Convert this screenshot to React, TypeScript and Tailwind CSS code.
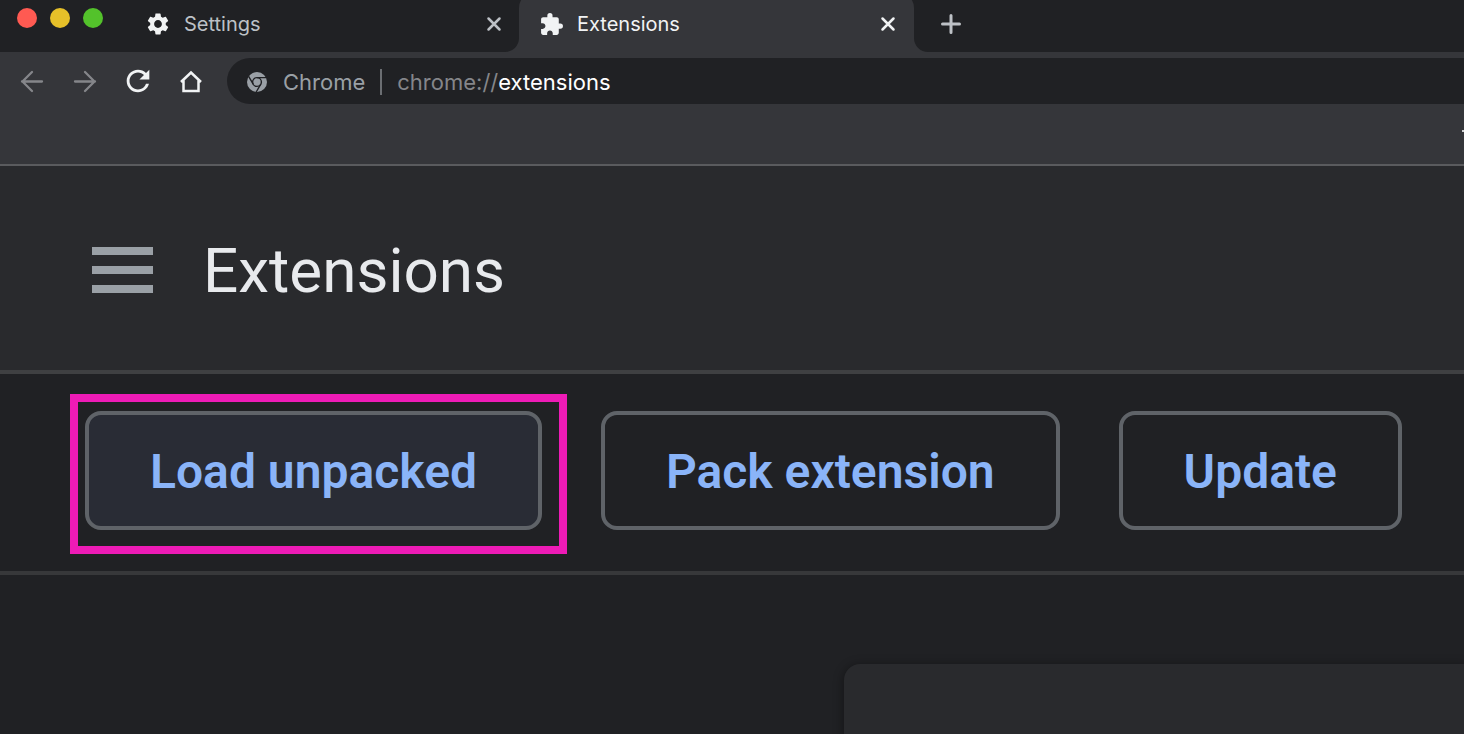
import type { ReactNode } from "react";
import { MdExtension, MdRefresh, MdSettings } from "react-icons/md";

function Cross() {
  return (
    <svg viewBox="0 0 16 16" className="size-4" fill="none" stroke="currentColor" strokeWidth="2.5" strokeLinecap="round">
      <path d="M2.500 2.500l11 11M13.500 2.500l-11 11" />
    </svg>
  );
}

function Arrow({ forward = false }: { forward?: boolean }) {
  return (
    <svg viewBox="0 0 24 24" className="size-6" fill="none" stroke="currentColor" strokeWidth="2.3" strokeLinecap="round" strokeLinejoin="round">
      <path d={forward ? "M2 12.500h20M12 3l9.500 9.500-9.500 9.500" : "M22 12.500H2M12 3l-9.500 9.500 9.500 9.500"} />
    </svg>
  );
}

function ChromeMark() {
  return (
    <svg viewBox="0 0 24 24" className="size-6">
      <circle cx="12" cy="12" r="10" fill="#9aa0a6" />
      <g fill="none" stroke="#202124" strokeWidth="1.4">
        <circle cx="12" cy="12" r="4.400" />
        <path d="M12 7.600h9.500M8.200 14.200L3.600 6.400M15.800 14.200L11.200 22" />
      </g>
    </svg>
  );
}

function OutlineButton({ children, filled = false }: { children: ReactNode; filled?: boolean }) {
  return (
    <button
      type="button"
      className={`rounded-2xl border-4 border-[#5f6368] px-[61px] pt-[25px] pb-[22px] text-[48px] leading-[64px] font-semibold whitespace-nowrap text-[#8ab4f8] ${filled ? "bg-[#292c35]" : ""}`}
    >
      {children}
    </button>
  );
}

function TabStrip() {
  return (
    <div className="flex h-[52px] overflow-hidden bg-[#202124] font-[Inter,sans-serif] text-[20px] leading-6">
      <div className="flex w-[145px] shrink-0 gap-[13px] pt-2 pl-[17px]">
        <button type="button" aria-label="Close window" className="size-5 rounded-full bg-[#ff5a52]" />
        <button type="button" aria-label="Minimize window" className="size-5 rounded-full bg-[#e6c029]" />
        <button type="button" aria-label="Zoom window" className="size-5 rounded-full bg-[#53c22b]" />
      </div>
      <div className="flex w-[374px] shrink-0 items-center pr-[17px] pb-1 text-[#bdc1c6]">
        <MdSettings className="mr-[13px] size-[26px] text-[#f1f3f4]" />
        <a href="#settings">Settings</a>
        <button type="button" aria-label="Close Settings" className="ml-auto">
          <Cross />
        </button>
      </div>
      <div className="relative -mt-2 flex w-[395px] shrink-0 items-center rounded-t-2xl bg-[#35363a] pt-2 pr-[18px] pb-1 pl-5 text-[#f1f3f4]">
        <svg viewBox="0 0 14 14" className="absolute right-full bottom-0 size-3.5" fill="#35363a">
          <path d="M14 0v14H0A14 14 0 0 0 14 0z" />
        </svg>
        <svg viewBox="0 0 14 14" className="absolute bottom-0 left-full size-3.5" fill="#35363a">
          <path d="M0 0v14h14A14 14 0 0 1 0 0z" />
        </svg>
        <MdExtension className="mr-[13px] size-[25px]" />
        <a href="#extensions">Extensions</a>
        <button type="button" aria-label="Close Extensions" className="ml-auto">
          <Cross />
        </button>
      </div>
      <button type="button" aria-label="New tab" className="ml-[26px] pb-1 text-[#bdc1c6]">
        <svg viewBox="0 0 22 22" className="size-[22px]" fill="none" stroke="currentColor" strokeWidth="3" strokeLinecap="round">
          <path d="M11 2.500v17M2.500 11h17" />
        </svg>
      </button>
    </div>
  );
}

function Toolbar() {
  return (
    <div className="flex items-center bg-[#35363a] pt-1.5 font-[Inter,sans-serif] text-[#f1f3f4]">
      <div className="flex w-[227px] shrink-0 items-center pl-5">
        <button type="button" aria-label="Back" className="mr-[29px] text-[#85868a]">
          <Arrow />
        </button>
        <button type="button" aria-label="Forward" className="mr-6 text-[#85868a]">
          <Arrow forward />
        </button>
        <button type="button" aria-label="Reload" className="mr-6">
          <MdRefresh className="size-[34px]" />
        </button>
        <button type="button" aria-label="Home">
          <svg viewBox="0 0 24 24" className="size-6" fill="none" stroke="currentColor" strokeWidth="2.500">
            <path d="M2 13L12 3.500l10 9.500M4.500 11.500v10.500h15v-10.500" />
          </svg>
        </button>
      </div>
      <div className="flex h-[46px] flex-1 items-center rounded-l-full bg-[#202124] pt-0.5 pl-[18px] text-[22px] leading-7">
        <ChromeMark />
        <span className="ml-[14px] text-[#9aa0a6]">Chrome</span>
        <span className="mx-[15px] h-[26px] w-0.5 bg-[#6b6e72]" />
        <span className="text-[#85868a]">
          chrome://<span className="text-white">extensions</span>
        </span>
      </div>
    </div>
  );
}

export default function App() {
  return (
    <div className="flex min-h-screen flex-col overflow-hidden bg-[#202124] font-[Roboto,sans-serif]">
      <TabStrip />
      <Toolbar />
      <div className="flex h-[62px] justify-end border-b-2 border-[#5a5b5e] bg-[#35363a] pt-[26px]">
        <span className="h-0.5 w-0.5 bg-[#d0d1d3]" />
      </div>
      <header className="flex h-[208px] items-center border-b-4 border-[#3f4042] bg-[#292a2d] pt-1 pl-[92px]">
        <button type="button" aria-label="Main menu" className="mr-[50px] flex flex-col gap-[11px]">
          <span className="h-2 w-[61px] bg-[#9aa0a6]" />
          <span className="h-2 w-[61px] bg-[#9aa0a6]" />
          <span className="h-2 w-[61px] bg-[#9aa0a6]" />
        </button>
        <h1 className="pt-0.5 text-[62px] leading-[72px] text-[#e8eaed]">Extensions</h1>
      </header>
      <div className="flex items-start gap-[59px] border-b-4 border-[#37383a] pt-[37px] pb-[41px] pl-[85px]">
        <div className="relative">
          <OutlineButton filled>Load unpacked</OutlineButton>
          <div className="pointer-events-none absolute -top-[17px] -right-[25px] -bottom-6 -left-[15px] border-8 border-[#ee1bb6]" />
        </div>
        <OutlineButton>Pack extension</OutlineButton>
        <OutlineButton>Update</OutlineButton>
      </div>
      <main className="flex flex-1 pt-[89px] pl-[844px]">
        <div className="flex-1 rounded-tl-2xl bg-[#292a2d] shadow-[0_2px_10px_2px_rgba(0,0,0,0.3)]" />
      </main>
    </div>
  );
}
